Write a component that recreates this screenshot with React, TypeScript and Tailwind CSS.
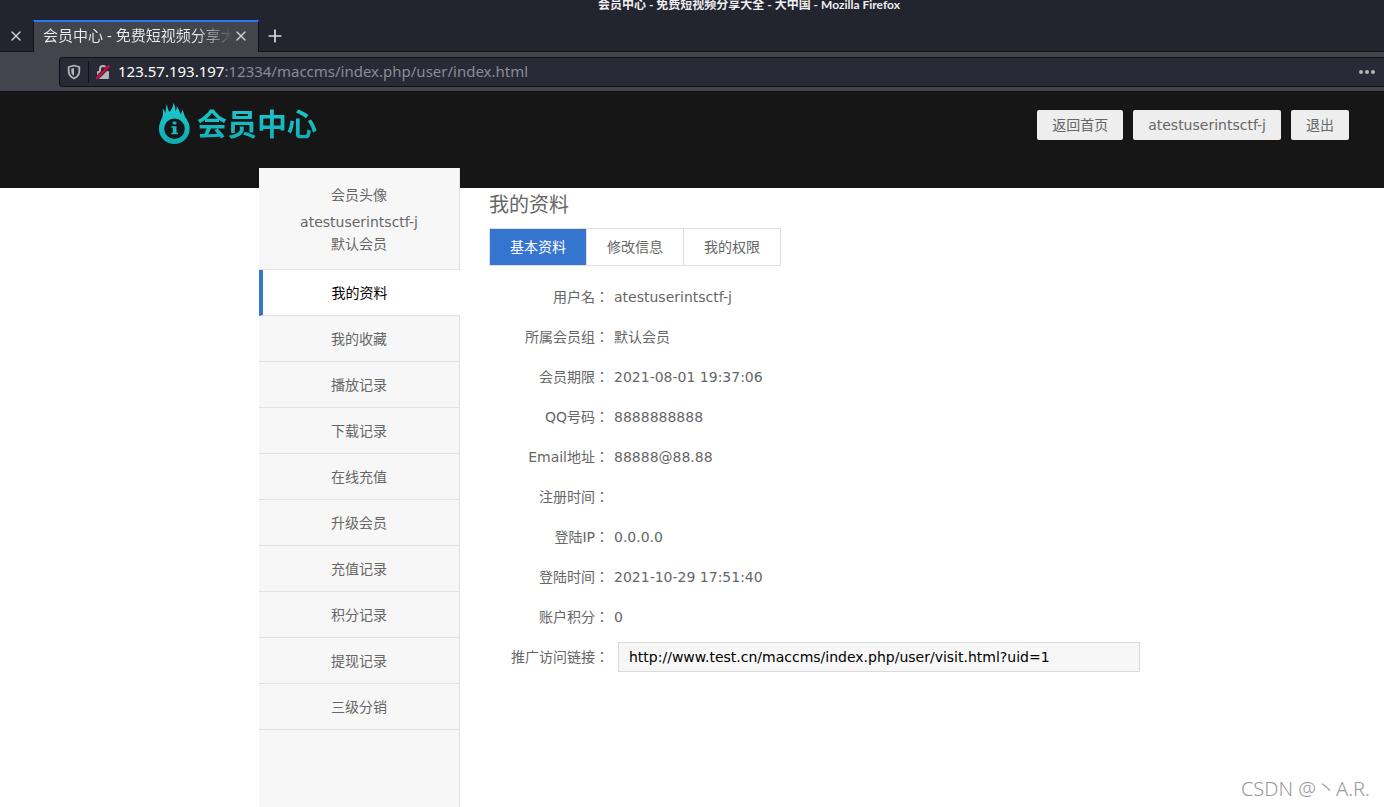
import { Plus, X } from 'lucide-react'

const username = 'atestuserintsctf-j'

const menu = [
  '我的资料',
  '我的收藏',
  '播放记录',
  '下载记录',
  '在线充值',
  '升级会员',
  '充值记录',
  '积分记录',
  '提现记录',
  '三级分销',
]

const tabs = ['基本资料', '修改信息', '我的权限']

const profile = [
  { label: '用户名', value: username },
  { label: '所属会员组', value: '默认会员' },
  { label: '会员期限', value: '2021-08-01 19:37:06' },
  { label: 'QQ号码', value: '8888888888' },
  { label: 'Email地址', value: '88888@88.88' },
  { label: '注册时间', value: '' },
  { label: '登陆IP', value: '0.0.0.0' },
  { label: '登陆时间', value: '2021-10-29 17:51:40' },
  { label: '账户积分', value: '0' },
]

function ShieldIcon() {
  return (
    <svg width="14" height="16" viewBox="0 0 14 16" fill="none" aria-hidden="true">
      <path
        d="M7 1.500 12.300 3v4.600c0 3.100-2 5.400-5.300 6.900-3.300-1.500-5.300-3.800-5.300-6.900V3Z"
        stroke="#b5b5b8"
        strokeWidth="1.8"
        strokeLinejoin="round"
      />
      <path d="M7 4 4.300 4.800v2.900c0 1.800.9 3.100 2.700 4.200Z" fill="#b5b5b8" />
    </svg>
  )
}

function InsecureLockIcon() {
  return (
    <svg width="16" height="16" viewBox="0 0 16 16" fill="none" aria-hidden="true">
      <path d="M5 8V5a3 3 0 0 1 6 0v3" stroke="#b5b5b8" strokeWidth="2" />
      <rect x="2" y="7" width="12" height="8" rx="1" fill="#b5b5b8" />
      <path d="M1 15 14.500 1.500" stroke="#282a35" strokeWidth="4" />
      <path d="M1.200 14.800 14.500 1.500" stroke="#e9083f" strokeWidth="2" />
    </svg>
  )
}

function FlameLogo() {
  return (
    <svg width="32" height="42" viewBox="0 0 32 42" aria-hidden="true">
      <defs>
        <linearGradient id="flame" x1="0" y1="0" x2="0" y2="1">
          <stop offset="0" stopColor="#1fc9d0" />
          <stop offset="1" stopColor="#0eaab2" />
        </linearGradient>
      </defs>
      <path
        fill="url(#flame)"
        fillRule="evenodd"
        d="M16.300 41C7.800 41 .9 34.200.9 25.700c0-4.700 1.900-8 3.300-11.200C5.300 12 5.100 9 4.700 5.500c1.500 1.500 2.300 3 2.500 5C8 8 7.500 4.500 9 1c.2 3.500 1 5.500 2.500 8C13.500 6.500 15.500 3.500 15.300 0c2 2.500 2.300 5.500 2 8.200 1.200-1.500 1.700-3 1.400-5.200 2 2.500 2.600 5.300 4 8 1.200-1.300 1.600-2.700 1.500-4.700 1.500 2.700 1.700 5 2.800 7.400 2 3 4.700 6.500 4.700 12C31.700 34.200 24.800 41 16.300 41Zm.2-5a10.300 10.300 0 1 0 0-20.600 10.300 10.300 0 0 0 0 20.600Z"
      />
      <ellipse cx="16.500" cy="20" rx="2.200" ry="1.600" fill="url(#flame)" />
      <path fill="#17babf" d="M13.300 23.300h5.200v6.500h1.500v1.500h-6.700v-1.500h1.500v-5h-1.500Z" />
    </svg>
  )
}

function BrowserChrome() {
  return (
    <div className="bg-[#23252e] font-['Noto_Sans','Noto_Sans_CJK_SC',sans-serif] text-[#eeeef0]">
      <div className="flex h-5 items-start justify-center pl-[114px] font-[Lato,'Noto_Sans_CJK_SC',sans-serif] text-xs leading-[10px] font-bold whitespace-nowrap">
        会员中心 - 免费短视频分享大全 - 大中国 - Mozilla Firefox
      </div>
      <div className="flex h-8 items-stretch border-b border-[#11131a]">
        <button type="button" aria-label="关闭标签页" className="flex w-[33px] items-center justify-center pr-[2px] text-[#d0d0d3]">
          <X size={16} strokeWidth={2} />
        </button>
        <div className="-mb-px flex w-[226px] items-center border-x border-t-2 border-x-[#11131a] border-t-[#2a7af5] bg-[#42454c] pr-[9px] pb-[2px] pl-[9px]">
          <span className="min-w-0 flex-1 overflow-hidden bg-linear-to-r from-[#eeeef0] from-80% to-transparent bg-clip-text text-[15px] whitespace-nowrap text-transparent">
            会员中心 - 免费短视频分享大全
          </span>
          <button type="button" aria-label="关闭当前标签页" className="text-[#d0d0d3]">
            <X size={16} strokeWidth={2} />
          </button>
        </div>
        <button type="button" aria-label="新建标签页" className="flex w-8 items-center justify-center text-[#dcdcdf]">
          <Plus size={20} strokeWidth={2} />
        </button>
      </div>
      <div className="border-b border-[#0d0e12] bg-[#42454c] pt-[5px] pb-1 pl-[59px]">
        <div className="flex h-[30px] items-center rounded-l-sm border border-r-0 border-[#0f1118] bg-[#282a35] pr-[9px] pl-[7px]">
          <ShieldIcon />
          <span className="mr-[6px] ml-[7px] h-[22px] w-px bg-[#0f1118]" />
          <InsecureLockIcon />
          <span className="ml-[7px] flex-1 text-[15px] text-[#8b8c93]">
            <span className="text-white">123.57.193.197</span>:12334/maccms/index.php/user/index.html
          </span>
          <button type="button" aria-label="页面操作" className="flex gap-[2px]">
            <i className="size-1 rounded-full bg-[#b5b5b8]" />
            <i className="size-1 rounded-full bg-[#b5b5b8]" />
            <i className="size-1 rounded-full bg-[#b5b5b8]" />
          </button>
        </div>
      </div>
    </div>
  )
}

function Header() {
  const button = 'h-[30px] rounded-xs bg-[#eee] px-[15px] leading-[30px] text-[#666]'
  return (
    <header className="flex h-24 items-start justify-between bg-[#161616] pr-[35px] pl-[158px]">
      <a href="#home" className="flex items-start gap-[7px] pt-[11px]">
        <FlameLogo />
        <span className="bg-linear-to-b from-[#1fc9d0] to-[#0eaab2] bg-clip-text text-[30px] leading-[44px] font-bold text-transparent">
          会员中心
        </span>
      </a>
      <nav className="flex gap-[10px] pt-[18px]">
        <a href="#home" className={button}>返回首页</a>
        <a href="#user" className={button}>{username}</a>
        <a href="#logout" className={button}>退出</a>
      </nav>
    </header>
  )
}

function Sidebar() {
  return (
    <aside className="-mt-5 flex w-[201px] shrink-0 flex-col bg-[#f7f7f7] text-center">
      <div className="border-r border-b border-[#e1e1e1] pt-4 pb-[14px] leading-[22px]">
        <p className="mb-[5px]">会员头像</p>
        <p>{username}</p>
        <p>默认会员</p>
      </div>
      <nav>
        {menu.map((item, i) => (
          <a
            key={item}
            href={`#menu-${i}`}
            className={
              i === 0
                ? 'block h-[46px] border-b border-l-4 border-b-[#e1e1e1] border-l-[#3575cf] bg-white pr-1 leading-[46px] text-black'
                : 'block h-[46px] border-r border-b border-[#e1e1e1] leading-[46px]'
            }
          >
            {item}
          </a>
        ))}
      </nav>
      <div className="flex-1 border-r border-[#e1e1e1]" />
    </aside>
  )
}

function Profile() {
  return (
    <main className="min-w-0 flex-1 pr-[244px] pl-[29px]">
      <h1 className="h-10 text-xl leading-[34px]">我的资料</h1>
      <div role="tablist" className="flex w-fit border border-[#e1e1e1]">
        {tabs.map((tab, i) => (
          <button
            key={tab}
            type="button"
            role="tab"
            aria-selected={i === 0}
            className={
              i === 0
                ? 'h-9 bg-[#3575cf] px-5 text-white'
                : 'h-9 border-l border-[#e1e1e1] px-5'
            }
          >
            {tab}
          </button>
        ))}
      </div>
      <dl className="mt-[11px] leading-10">
        {profile.map(({ label, value }) => (
          <div key={label} className="flex h-10">
            <dt className="mr-[5px] w-[120px] text-right">{label}：</dt>
            <dd>{value}</dd>
          </div>
        ))}
      </dl>
      <div className="flex h-10 items-center">
        <label htmlFor="link" className="mr-[9px] w-[120px] shrink-0 text-right">
          推广访问链接：
        </label>
        <input
          id="link"
          type="text"
          readOnly
          value="http://www.test.cn/maccms/index.php/user/visit.html?uid=1"
          className="h-[30px] min-w-0 flex-1 border border-[#dadada] bg-[#f7f7f7] px-[10px] text-black"
        />
      </div>
    </main>
  )
}

export default function App() {
  return (
    <div className="relative flex min-h-screen flex-col bg-white font-['DejaVu_Sans','Noto_Sans_CJK_JP',sans-serif] text-sm text-[#666]">
      <BrowserChrome />
      <Header />
      <div className="flex flex-1 pl-[259px]">
        <Sidebar />
        <Profile />
      </div>
      <span className="absolute right-[14px] bottom-1 font-['Noto_Sans','Noto_Sans_CJK_SC',sans-serif] text-xl font-light text-[#999]">
        CSDN @丶A.R.
      </span>
    </div>
  )
}
